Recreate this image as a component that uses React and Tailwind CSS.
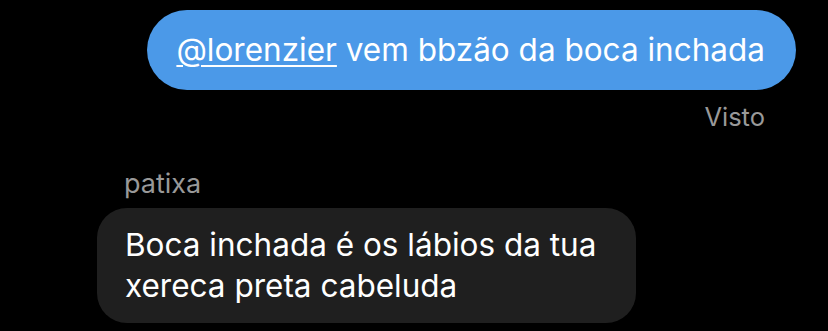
export default function App() {
    return (
        <div className="w-[828px] h-[331px] bg-black overflow-hidden font-['Inter',sans-serif]">
            <div className="flex flex-col items-end pr-[32px] pt-[10px]">
                <div className="h-[80px] rounded-full bg-[#4b99e8] pl-[29px] pr-[31px] flex items-center text-white text-[31.5px] leading-[36px]">
                    <span className="underline underline-offset-[4px] decoration-[2px]">@lorenzier</span>
                    <span>&nbsp;vem bbzão da boca inchada</span>
                </div>
                <div className="mr-[31px] mt-[12px] text-[25.5px] leading-[30px] text-[#999999]">Visto</div>
            </div>
            <div className="pl-[97px] mt-[38px] flex flex-col items-start">
                <div className="ml-[27px] text-[27px] leading-[28px] text-[#999999]">patixa</div>
                <div className="mt-[10px] w-[539px] rounded-[30px] bg-[#1f1f1f] pl-[28px] pr-[20px] pt-[16px] pb-[17px] text-white text-[31.5px] leading-[41px]">
                    Boca inchada é os lábios da tua xereca preta cabeluda
                </div>
            </div>
        </div>
    );
}
